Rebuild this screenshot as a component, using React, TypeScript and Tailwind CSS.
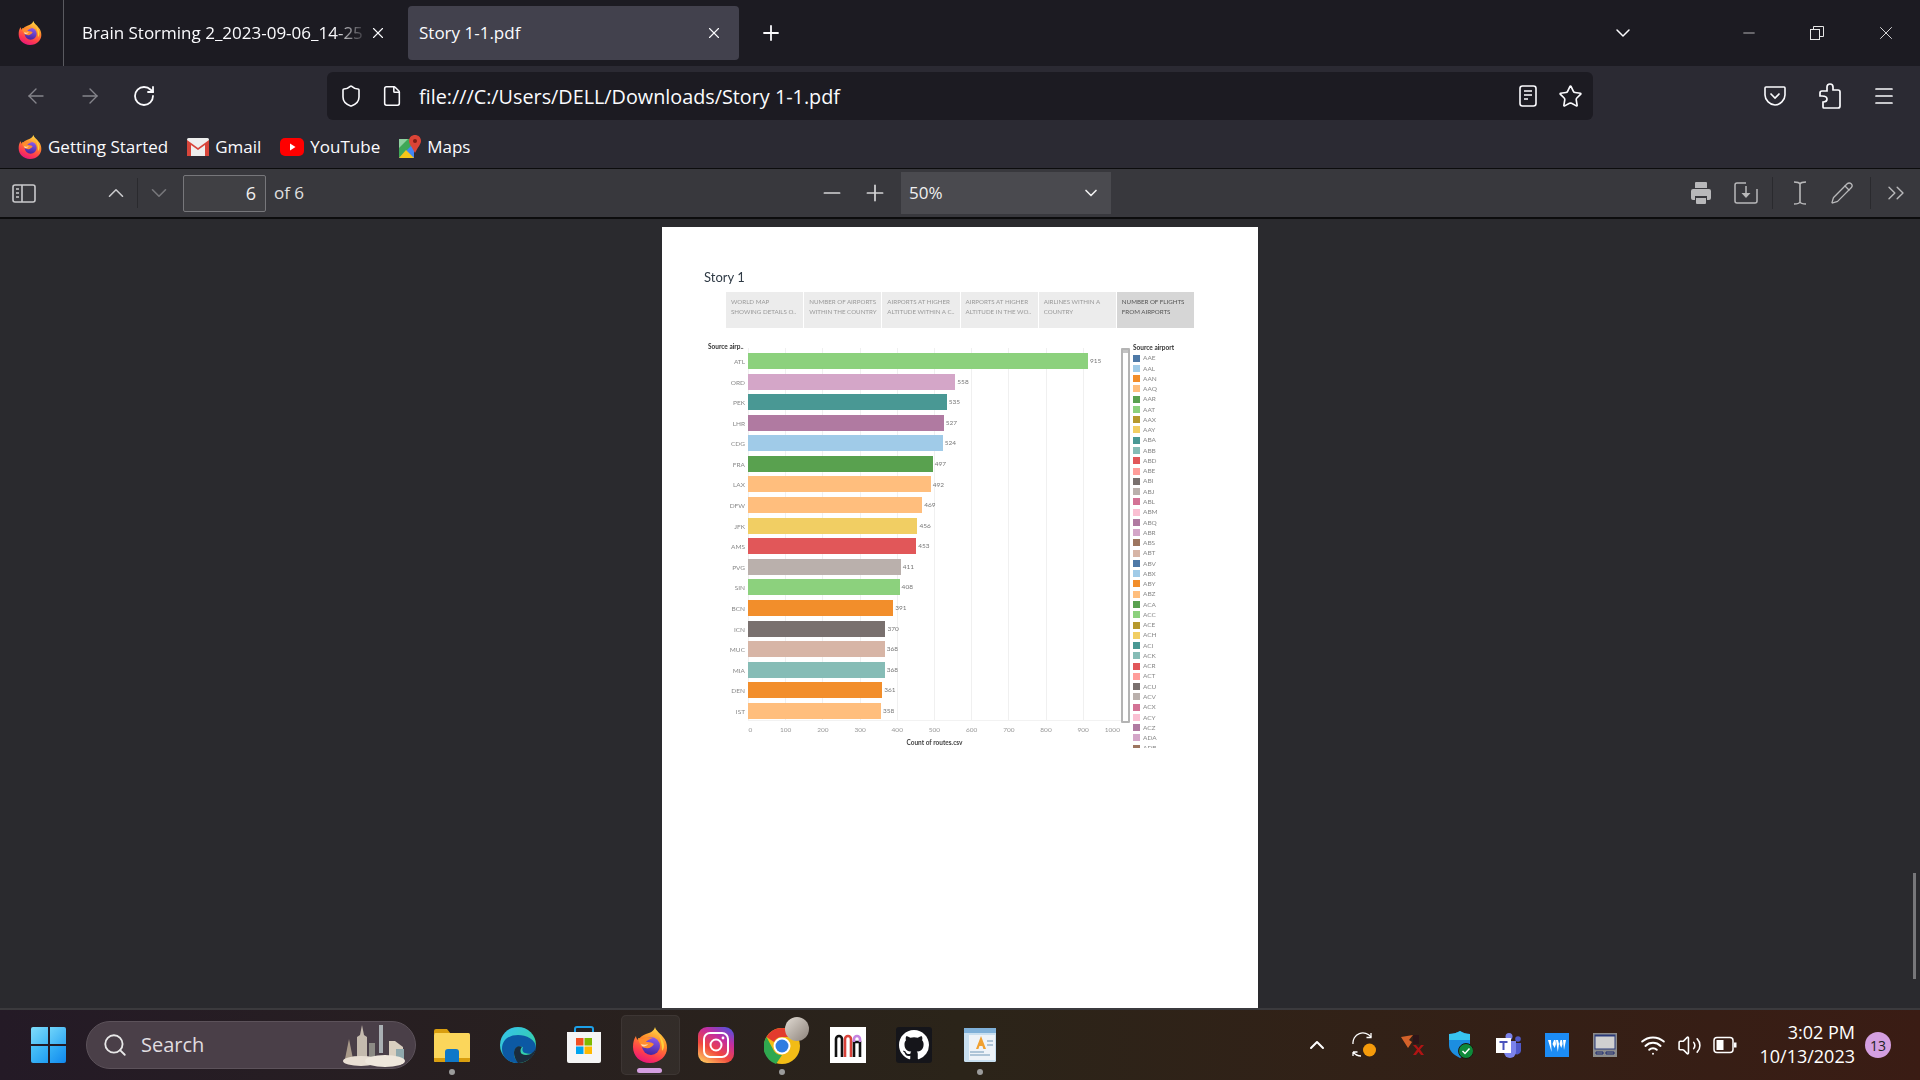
import React from "react";
import {
  ArrowLeft,
  ArrowRight,
  ChevronDown,
  ChevronUp,
  ChevronsRight,
  File,
  Menu,
  Minus,
  Pencil,
  Plus,
  RotateCw,
  Search,
  Shield,
  Star,
  Volume2,
  Wifi,
  X,
} from "lucide-react";

const BARS = [
  { code: "ATL", value: 915, color: "#8cd17d" },
  { code: "ORD", value: 558, color: "#d4a6c8" },
  { code: "PEK", value: 535, color: "#499894" },
  { code: "LHR", value: 527, color: "#b07aa1" },
  { code: "CDG", value: 524, color: "#a0cbe8" },
  { code: "FRA", value: 497, color: "#59a14f" },
  { code: "LAX", value: 492, color: "#ffbe7d" },
  { code: "DFW", value: 469, color: "#ffbe7d" },
  { code: "JFK", value: 456, color: "#f1ce63" },
  { code: "AMS", value: 453, color: "#e15759" },
  { code: "PVG", value: 411, color: "#bab0ac" },
  { code: "SIN", value: 408, color: "#8cd17d" },
  { code: "BCN", value: 391, color: "#f28e2b" },
  { code: "ICN", value: 370, color: "#79706e" },
  { code: "MUC", value: 368, color: "#d7b5a6" },
  { code: "MIA", value: 368, color: "#86bcb6" },
  { code: "DEN", value: 361, color: "#f28e2b" },
  { code: "IST", value: 358, color: "#ffbe7d" },
];

const PALETTE = [
  "#4e79a7", "#a0cbe8", "#f28e2b", "#ffbe7d", "#59a14f", "#8cd17d", "#b6992d", "#f1ce63", "#499894", "#86bcb6",
  "#e15759", "#ff9d9a", "#79706e", "#bab0ac", "#d37295", "#fabfd2", "#b07aa1", "#d4a6c8", "#9d7660", "#d7b5a6",
];

const LEGEND = [
  "AAE", "AAL", "AAN", "AAQ", "AAR", "AAT", "AAX", "AAY", "ABA", "ABB", "ABD", "ABE", "ABI", "ABJ", "ABL", "ABM",
  "ABQ", "ABR", "ABS", "ABT", "ABV", "ABX", "ABY", "ABZ", "ACA", "ACC", "ACE", "ACH", "ACI", "ACK", "ACR", "ACT",
  "ACU", "ACV", "ACX", "ACY", "ACZ", "ADA", "ADB",
];

const STORY_TABS = [
  ["WORLD MAP", "SHOWING DETAILS O.."],
  ["NUMBER OF AIRPORTS", "WITHIN THE COUNTRY"],
  ["AIRPORTS AT HIGHER", "ALTITUDE WITHIN A C.."],
  ["AIRPORTS AT HIGHER", "ALTITUDE IN THE WO.."],
  ["AIRLINES WITHIN A", "COUNTRY"],
  ["NUMBER OF FLIGHTS", "FROM AIRPORTS"],
];

const TICKS = [0, 100, 200, 300, 400, 500, 600, 700, 800, 900, 1000];

function FirefoxLogo({ size }: { size: number }) {
  return (
    <svg width={size} height={size} viewBox="0 0 36 36">
      <defs>
        <linearGradient id="ffBody" x1="0.75" y1="0" x2="0.35" y2="1">
          <stop offset="0" stopColor="#ffe14a" />
          <stop offset="0.4" stopColor="#ff8a2a" />
          <stop offset="0.75" stopColor="#ff3d4d" />
          <stop offset="1" stopColor="#e8177a" />
        </linearGradient>
        <linearGradient id="ffGlobe" x1="0.6" y1="0" x2="0.4" y2="1">
          <stop offset="0" stopColor="#8a5cf0" />
          <stop offset="1" stopColor="#45259e" />
        </linearGradient>
      </defs>
      <path
        d="M23 0c1 4 5 6 8 10 3 3 4 7 4 11 0 8-7 15-17 15S1 29 1 20c0-5 1-8 3-11 0 2 1 3 2 4 2-3 5-5 8-6 4-1 8-3 9-7z"
        fill="url(#ffBody)"
      />
      <path d="M27 8c3 3 5 7 5 11 0 2-1 4-2 5 0-6-1-11-3-16z" fill="#ffcf3a" />
      <circle cx="19" cy="19" r="9" fill="url(#ffGlobe)" />
      <path d="M6 11c2 0 3 1 4 1 3-1 7-2 11-1-3 1-6 2-7 4 2 0 5 0 8 2-2 3-5 5-8 4-3 0-5-2-6-4-1-2-2-4-2-6z" fill="#ff8d2e" />
      <path d="M9 17c2 1 5 1 7 0-1 2-4 3-6 2z" fill="#ffd9b0" />
    </svg>
  );
}

function GmailIcon() {
  return (
    <svg width="22" height="18" viewBox="0 0 22 18">
      <rect x="0" y="0" width="22" height="18" rx="1.5" fill="#eee" />
      <path d="M0 2l11 8 11-8v16h-4V7l-7 5-7-5v11H0z" fill="#d8453a" />
    </svg>
  );
}

function YoutubeIcon() {
  return (
    <svg width="24" height="18" viewBox="0 0 24 18">
      <rect width="24" height="18" rx="5" fill="#f00" />
      <path d="M10 5.5l5.5 3.5-5.5 3.5z" fill="#fff" />
    </svg>
  );
}

function MapsIcon() {
  return (
    <svg width="22" height="24" viewBox="0 0 22 24">
      <path d="M0 4h15v19H0z" fill="#3fa757" />
      <path d="M0 23L15 8v15z" fill="#4285f4" />
      <path d="M0 23l7-8 8 8z" fill="#f5c518" />
      <path d="M0 4h9L0 13z" fill="#8fd1a0" />
      <path d="M16 0c3 0 6 2 6 6 0 3-3 6-6 12-3-6-6-9-6-12 0-4 3-6 6-6z" fill="#db4437" />
      <circle cx="16" cy="6" r="2" fill="#7c1d16" />
    </svg>
  );
}

function ReaderIcon() {
  return (
    <svg width="20" height="22" viewBox="0 0 20 22" fill="none" stroke="#fbfbfe" strokeWidth="1.6">
      <rect x="2" y="1" width="16" height="20" rx="2.5" />
      <path d="M6 6h8M6 10h8M6 14h4" />
    </svg>
  );
}

function PocketIcon() {
  return (
    <svg width="22" height="20" viewBox="0 0 22 20" fill="none" stroke="#fbfbfe" strokeWidth="1.6">
      <path d="M2 1h18a1 1 0 0 1 1 1v7c0 5-5 10-10 10S1 14 1 9V2a1 1 0 0 1 1-1z" />
      <path d="M6.5 7.5L11 12l4.5-4.5" />
    </svg>
  );
}

function ExtensionIcon() {
  return (
    <svg width="22" height="26" viewBox="0 0 22 26" fill="none" stroke="#fbfbfe" strokeWidth="1.7">
      <path d="M11 1c2 0 3 1.500 3 3v3h5a2 2 0 0 1 2 2v14a2 2 0 0 1-2 2H5a1 1 0 0 1-1-1v-5c2 0 4-1 4-3s-2-3-5-3h-2v-3c0-1 1-2 2-2h5V4c0-1.500 1-3 3-3z" />
    </svg>
  );
}

function SidebarIcon() {
  return (
    <svg width="24" height="19" viewBox="0 0 24 19" fill="none" stroke="#c9c9cc" strokeWidth="1.6">
      <rect x="1" y="1" width="22" height="17" rx="2" />
      <path d="M10 1v17M4 5h3M4 9h3M4 13h3" />
    </svg>
  );
}

function PrintIcon() {
  return (
    <svg width="22" height="24" viewBox="0 0 22 24" fill="#b8b8ba">
      <path d="M6 1h10a1 1 0 0 1 1 1v5H5V2a1 1 0 0 1 1-1z" />
      <path d="M3 8h16a2 2 0 0 1 2 2v7a2 2 0 0 1-2 2h-2v-4H5v4H3a2 2 0 0 1-2-2v-7a2 2 0 0 1 2-2z" />
      <path d="M6 17h10v5a1 1 0 0 1-1 1H7a1 1 0 0 1-1-1z" />
    </svg>
  );
}

function SaveIcon() {
  return (
    <svg width="24" height="22" viewBox="0 0 24 22" fill="none" stroke="#b8b8ba" strokeWidth="1.5">
      <path d="M12 1H3a2 2 0 0 0-2 2v16a2 2 0 0 0 2 2h18a2 2 0 0 0 2-2V7" />
      <path d="M12 4v9" />
      <path d="M7.5 11h9L12 16z" fill="#b8b8ba" stroke="none" />
    </svg>
  );
}

function CursorIcon() {
  return (
    <svg width="14" height="24" viewBox="0 0 14 24" fill="none" stroke="#b8b8ba" strokeWidth="1.6">
      <path d="M1 1c3 0 5 0 6 2v18c-1 2-3 2-6 2M13 1c-3 0-5 0-6 2M13 23c-3 0-5 0-6-2" />
    </svg>
  );
}

function RestoreIcon() {
  return (
    <svg width="16" height="16" viewBox="0 0 16 16" fill="none" stroke="#e6e6e6" strokeWidth="1">
      <rect x="1.5" y="4.5" width="9" height="10" />
      <path d="M4.5 4.5v-3h10v10h-4" />
    </svg>
  );
}

function WindowsLogo() {
  return (
    <div className="grid grid-cols-2 gap-[2px] w-[35px] h-[36px]">
      <div className="bg-gradient-to-br from-[#7fdcfb] to-[#3fb8f5] rounded-tl-[2px]" />
      <div className="bg-gradient-to-br from-[#6fd4fa] to-[#2fa9f3] rounded-tr-[2px]" />
      <div className="bg-gradient-to-br from-[#4cc4f8] to-[#1e9cf2] rounded-bl-[2px]" />
      <div className="bg-gradient-to-br from-[#38b4f6] to-[#0f88ee] rounded-br-[2px]" />
    </div>
  );
}

function CityArt() {
  return (
    <svg width="68" height="44" viewBox="0 0 68 44">
      <path d="M6 36l4-20 4 20z" fill="#a99a8a" />
      <path d="M18 38V14l3-2 2-10 2 10 3 2v24z" fill="#c5bbae" />
      <path d="M30 36V20h6v16z" fill="#8c8a84" />
      <path d="M40 30V2h4v28z" fill="#aab0b4" />
      <path d="M50 36V18h6l8 6v12z" fill="#d9cfc0" />
      <path d="M57 26h8v10h-8z" fill="#8fa8ad" />
      <ellipse cx="22" cy="38" rx="18" ry="5" fill="#e9dfd3" />
      <ellipse cx="46" cy="38" rx="20" ry="6" fill="#efe7dc" />
    </svg>
  );
}

function ExplorerIcon() {
  return (
    <svg width="36" height="34" viewBox="0 0 36 34">
      <path d="M0 3a2 2 0 0 1 2-2h11l4 5H0z" fill="#d99e0e" />
      <rect x="0" y="5" width="36" height="29" rx="1.5" fill="#fbd65b" />
      <path d="M0 30h36v2a2 2 0 0 1-2 2H2a2 2 0 0 1-2-2z" fill="#d99e0e" />
      <path d="M11 24a3 3 0 0 1 3-3h8a3 3 0 0 1 3 3v10H11z" fill="#0f78c8" />
    </svg>
  );
}

function EdgeIcon() {
  return (
    <svg width="36" height="36" viewBox="0 0 36 36">
      <defs>
        <linearGradient id="edgeA" x1="0" y1="0" x2="1" y2="1">
          <stop offset="0" stopColor="#35c1f1" />
          <stop offset="1" stopColor="#35d68e" />
        </linearGradient>
      </defs>
      <circle cx="18" cy="18" r="18" fill="url(#edgeA)" />
      <path d="M2 22C2 12 10 8 18 8c8 0 18 4 18 13 0 5-6 7-11 5-3-1-3-4-2-6-6-2-9 2-9 7 0 4 2 7 6 9C10 37 2 31 2 22z" fill="#0c59a4" />
      <path d="M36 20c-2 8-10 9-14 7-2-1-2-5 0-7-4-2-8 1-8 6 0 3 1 6 4 10 9 0 18-7 18-16z" fill="#1b2c3d" />
    </svg>
  );
}

function StoreIcon() {
  return (
    <svg width="36" height="38" viewBox="0 0 36 38">
      <path d="M9 6V3a2 2 0 0 1 2-2h14a2 2 0 0 1 2 2v3" fill="none" stroke="#1ca0e8" strokeWidth="2" />
      <path d="M1 6h34l0 29a2 2 0 0 1-2 2H3a2 2 0 0 1-2-2z" fill="#f5f5f5" />
      <rect x="10" y="12" width="7.5" height="7.5" fill="#f25022" />
      <rect x="18.5" y="12" width="7.5" height="7.5" fill="#7fba00" />
      <rect x="10" y="20.5" width="7.5" height="7.5" fill="#00a4ef" />
      <rect x="18.5" y="20.5" width="7.5" height="7.5" fill="#ffb900" />
    </svg>
  );
}

function InstagramIcon() {
  return (
    <svg width="36" height="36" viewBox="0 0 36 36">
      <defs>
        <linearGradient id="igGrad" x1="0.2" y1="1" x2="0.8" y2="0">
          <stop offset="0" stopColor="#fdc15c" />
          <stop offset="0.35" stopColor="#f1473e" />
          <stop offset="0.7" stopColor="#c52d9f" />
          <stop offset="1" stopColor="#5b4fd8" />
        </linearGradient>
      </defs>
      <rect width="36" height="36" rx="9" fill="url(#igGrad)" />
      <rect x="6" y="6" width="24" height="24" rx="6" fill="none" stroke="#fff" strokeWidth="2" />
      <circle cx="18" cy="18" r="5.5" fill="none" stroke="#fff" strokeWidth="2" />
      <circle cx="25" cy="11" r="1.4" fill="#fff" />
    </svg>
  );
}

function ChromeIcon() {
  return (
    <div className="relative w-[36px] h-[36px]">
      <svg width="36" height="38" viewBox="0 0 36 38">
        <circle cx="18" cy="19" r="18" fill="#f2bc16" />
        <path d="M18 1a18 18 0 0 1 15.6 9H18a9 9 0 0 0-8 5L2.5 10A18 18 0 0 1 18 1z" fill="#e33b2e" />
        <path d="M2.5 10L10 24a9 9 0 0 0 8 4l-6 9A18 18 0 0 1 2.5 10z" fill="#2fa84f" />
        <circle cx="18" cy="19" r="8.5" fill="#fff" />
        <circle cx="18" cy="19" r="6.5" fill="#2f7de1" />
      </svg>
      <div className="absolute left-[21px] top-[-10px] w-[24px] h-[24px] rounded-full bg-gradient-to-br from-[#e2dcd4] to-[#8d837b]" />
    </div>
  );
}

function ArcIcon() {
  return (
    <div className="w-[36px] h-[36px] bg-white flex items-center justify-center">
      <svg width="28" height="24" viewBox="0 0 28 24" fill="none" strokeWidth="2.6">
        <path d="M2 24V6a3 3 0 0 1 6 0v18" stroke="#111" />
        <path d="M11 24V6a3 3 0 0 1 6 0v18" stroke="#d9423a" />
        <path d="M20 24V9h6v15" stroke="#111" />
        <path d="M20 9V6a3 3 0 0 1 6 0v3" stroke="#c583e0" />
      </svg>
    </div>
  );
}

function GithubIcon() {
  return (
    <div className="w-[36px] h-[36px] bg-[#15151a] rounded-[3px] flex items-center justify-center">
      <svg width="30" height="32" viewBox="0 0 16 16" fill="#fff">
        <path d="M8 0C3.58 0 0 3.58 0 8c0 3.54 2.29 6.53 5.47 7.59.4.07.55-.17.55-.38 0-.19-.01-.82-.01-1.49-2.01.37-2.53-.49-2.69-.94-.09-.23-.48-.94-.82-1.13-.28-.15-.68-.52-.01-.53.63-.01 1.08.58 1.23.82.72 1.21 1.87.87 2.33.66.07-.52.28-.87.51-1.07-1.78-.2-3.64-.89-3.64-3.95 0-.87.31-1.59.82-2.15-.08-.2-.36-1.02.08-2.12 0 0 .67-.21 2.2.82.64-.18 1.32-.27 2-.27s1.36.09 2 .27c1.53-1.04 2.2-.82 2.2-.82.44 1.1.16 1.92.08 2.12.51.56.82 1.27.82 2.15 0 3.07-1.87 3.75-3.65 3.95.29.25.54.73.54 1.48 0 1.07-.01 1.93-.01 2.2 0 .21.15.46.55.38A8.01 8.01 0 0 0 16 8c0-4.42-3.58-8-8-8z" />
      </svg>
    </div>
  );
}

function WordpadIcon() {
  return (
    <svg width="36" height="36" viewBox="0 0 36 36">
      <rect x="2" y="1" width="32" height="34" rx="1.5" fill="#c8dff0" />
      <rect x="2" y="1" width="32" height="5" fill="#7fb0d8" />
      <rect x="7" y="8" width="26" height="25" fill="#eef3f8" />
      <path d="M14 22l5-13 5 13h-2.6l-1-3h-3l-1 3z" fill="#f0a030" />
      <path d="M8 25h14M8 28h20M25 14h6M25 18h6" stroke="#9bb6cc" strokeWidth="1.4" />
    </svg>
  );
}

function SyncIcon() {
  return (
    <svg width="26" height="26" viewBox="0 0 26 26" fill="none" stroke="#fff" strokeWidth="1.3">
      <path d="M1 12A10 10 0 0 1 19 5" />
      <path d="M19 1v4.5h-4.5" />
      <path d="M1 20v4M1 20h4.5M1 20c2 2.5 4.5 4 8 4" />
      <circle cx="17.5" cy="18" r="6.5" fill="#f59b0b" stroke="none" />
    </svg>
  );
}

function VectorIcon() {
  return (
    <svg width="26" height="22" viewBox="0 0 26 22">
      <path d="M1 3l12-2-4 5 3 2-4 6z" fill="#d4622a" />
      <path d="M13 1h6v9h-6z" fill="#2c1418" />
      <path d="M13 11l3 0 2.500 3 2.500-3 3 0-4 4.500 4 5.500h-3l-2.500-3.200L16 21h-3l4-5.500z" fill="#b01414" />
    </svg>
  );
}

function DefenderIcon() {
  return (
    <svg width="24" height="28" viewBox="0 0 24 28">
      <path d="M11 0c3 2 6 3 10 3v11c0 6-4 10-10 13C5 24 0 20 0 14V3c4 0 8-1 11-3z" fill="#1c8ee0" />
      <path d="M11 0c3 2 6 3 10 3v6H0V3c4 0 8-1 11-3z" fill="#38c4ef" />
      <circle cx="17" cy="20" r="7.500" fill="#0e8a3a" stroke="#20150f" strokeWidth="1" />
      <path d="M13.500 20l2.500 2.500 4.500-5" fill="none" stroke="#fff" strokeWidth="1.5" />
    </svg>
  );
}

function TeamsIcon() {
  return (
    <svg width="26" height="26" viewBox="0 0 26 26">
      <circle cx="13" cy="4.500" r="3.500" fill="#7b83eb" />
      <circle cx="22" cy="7" r="2.800" fill="#5059c9" />
      <path d="M18 11h7v8a4 4 0 0 1-7 2z" fill="#5059c9" />
      <path d="M8 9h12v11a6 6 0 0 1-12 0z" fill="#7b83eb" />
      <rect x="0" y="6" width="15" height="15" fill="#fff" />
      <path d="M3.500 9h8v2H8.500v7h-2v-7h-3z" fill="#4b53bc" />
    </svg>
  );
}

function WavesIcon() {
  return (
    <div className="w-[24px] h-[24px] bg-[#1c8cf5] flex items-center justify-center">
      <svg width="20" height="14" viewBox="0 0 20 14" fill="#fff">
        <path d="M1 2l3 0 .6 12zM5.500 6l1.500-4 1.500 0 .5 4L7.700 10zM9 2l2 0 1 4-1.200 8zM12.500 6l1-4 1.500 0 .6 4-1.300 4zM16 2l3 0-2 10z" />
      </svg>
    </div>
  );
}

function MonitorTrayIcon() {
  return (
    <svg width="24" height="24" viewBox="0 0 24 24">
      <rect width="24" height="24" fill="#8c8c8c" />
      <rect x="2" y="2" width="20" height="14" fill="#d0d0d0" stroke="#2a3a7a" strokeWidth="1" />
      <rect x="2" y="2" width="20" height="1.500" fill="#2a3a7a" />
      <path d="M3 21v-2h7v2zM13 21v-2h8v2z" fill="none" stroke="#1d2a70" strokeWidth="1" />
    </svg>
  );
}

function BatteryIcon() {
  return (
    <svg width="24" height="18" viewBox="0 0 24 18" fill="none">
      <rect x="1" y="1.500" width="19" height="15" rx="3" stroke="#fff" strokeWidth="1.500" />
      <rect x="3.500" y="4" width="7" height="10" fill="#fff" />
      <rect x="21" y="6.500" width="2.500" height="5" fill="#fff" />
    </svg>
  );
}

function Bookmark({ icon, label }: { icon: React.ReactNode; label: string }) {
  return (
    <div className="flex items-center gap-[6px]">
      {icon}
      <span className="text-[17px] text-[#fbfbfe]">{label}</span>
    </div>
  );
}

function TaskSlot({ children, dot, active }: { children: React.ReactNode; dot?: boolean; active?: boolean }) {
  return (
    <div className="relative w-[66px] h-[60px] flex items-center justify-center">
      {active && <div className="absolute left-[4px] right-[3px] inset-y-0 rounded-[5px] bg-white/5 border border-white/5" />}
      <div className="relative">{children}</div>
      {dot && <div className="absolute bottom-[0px] left-[30px] w-[6px] h-[6px] rounded-full bg-[#9b9b9b]" />}
      {active && <div className="absolute bottom-[2px] left-[20px] w-[25px] h-[5px] rounded-full bg-[#d49fe0]" />}
    </div>
  );
}

function TraySlot({ children }: { children: React.ReactNode }) {
  return <div className="w-[48px] h-[30px] flex items-center justify-center">{children}</div>;
}

function StoryChart() {
  return (
    <div className="font-['Lato',sans-serif] blur-[0.4px]">
      <div className="ml-[42px] text-[13px] leading-[16px] text-[#2f3a45]">Story 1</div>
      <div className="ml-[64px] mt-[7px] flex gap-[1px] w-[468px] h-[36px]">
        {STORY_TABS.map((tab, i) => (
          <div
            key={i}
            className={
              i === 5
                ? "flex-1 bg-[#d6d6d6] pl-[5px] pt-[5px] text-[6.2px] leading-[10px] text-[#555] whitespace-nowrap overflow-hidden"
                : "flex-1 bg-[#ececec] pl-[5px] pt-[5px] text-[6.2px] leading-[10px] text-[#999] whitespace-nowrap overflow-hidden"
            }
          >
            <div>{tab[0]}</div>
            <div>{tab[1]}</div>
          </div>
        ))}
      </div>
      <div className="flex mt-[15px]">
        <div className="w-[86px] shrink-0">
          <div className="pl-[46px] h-[10px] text-[6.5px] leading-[8px] font-bold text-[#333] whitespace-nowrap">Source airp..</div>
          <div className="flex flex-col gap-[4.58px] mt-[1px]">
            {BARS.map((bar) => (
              <div key={bar.code} className="h-[16px] pr-[3px] text-right text-[6.5px] leading-[16px] text-[#888]">
                {bar.code}
              </div>
            ))}
          </div>
        </div>
        <div className="w-[373px] shrink-0">
          <div className="relative h-[373px] mt-[5px] border-b border-[#f2f2f2]">
            <div className="absolute inset-0 flex justify-between">
              {TICKS.map((tick) => (
                <div key={tick} className={tick === 1000 ? "w-px h-full" : "w-px h-full bg-[#f0f0f0]"} />
              ))}
            </div>
            <div className="relative flex flex-col gap-[4.58px] pt-[5px]">
              {BARS.map((bar) => (
                <div key={bar.code} className="flex items-center h-[16px]">
                  <div className="h-[16px]" style={{ width: bar.value * 0.3716, backgroundColor: bar.color }} />
                  <span className="ml-[2px] text-[6.5px] text-[#777]">{bar.value}</span>
                </div>
              ))}
            </div>
          </div>
          <div className="flex justify-between mt-[5px] text-[6.5px] leading-[8px] text-[#999]">
            {TICKS.map((tick) => (
              <span
                key={tick}
                className={
                  tick === 0
                    ? "w-px flex justify-center translate-x-[2px]"
                    : tick === 1000
                      ? "w-px flex justify-center -translate-x-[8px]"
                      : "w-px flex justify-center"
                }
              >
                {tick}
              </span>
            ))}
          </div>
          <div className="mt-[5px] text-center text-[6.5px] leading-[8px] font-bold text-[#444]">Count of routes.csv</div>
        </div>
        <div className="w-[9px] h-[375px] mt-[5px] shrink-0 border-2 border-[#b4b4b4] rounded-[1px]">
          <div className="h-[3px] bg-[#c4c4c4]" />
        </div>
        <div className="ml-[3px] h-[405px] overflow-hidden pt-[1px]">
          <div className="h-[9px] text-[6.5px] leading-[8px] font-bold text-[#333] whitespace-nowrap">Source airport</div>
          <div className="flex flex-col">
            {LEGEND.map((code, i) => (
              <div key={code} className="flex items-center gap-[3px] h-[10.28px]">
                <div className="w-[7px] h-[7px]" style={{ backgroundColor: PALETTE[i % 20] }} />
                <span className="text-[6.5px] text-[#888]">{code}</span>
              </div>
            ))}
          </div>
        </div>
      </div>
    </div>
  );
}

export default function App() {
  return (
    <div className="w-[1920px] h-[1080px] flex flex-col overflow-hidden bg-[#2a2a2e] font-['Open_Sans',sans-serif]">
      {/* Tab strip */}
      <div className="h-[66px] shrink-0 bg-[#1c1b22] flex items-center text-[#fbfbfe]">
        <div className="w-[64px] h-full shrink-0 border-r border-[#5a5a60] mr-[18px] pl-[18px] flex items-center">
          <FirefoxLogo size={24} />
        </div>
        <div className="w-[286px] text-[17px] whitespace-nowrap overflow-hidden [mask-image:linear-gradient(to_right,black_88%,transparent)]">
          Brain Storming 2_2023-09-06_14-25
        </div>
        <X size={18} strokeWidth={1.5} className="ml-[1px] mr-[21px]" />
        <div className="w-[331px] h-[54px] bg-[#42414d] rounded-[4px] flex items-center justify-between pl-[11px] pr-[16px] text-[17px]">
          <span>Story 1-1.pdf</span>
          <X size={18} strokeWidth={1.5} />
        </div>
        <Plus size={24} strokeWidth={1.8} className="ml-[20px]" />
        <div className="flex-1" />
        <ChevronDown size={24} strokeWidth={1.5} className="mr-[105px]" />
        <Minus size={18} strokeWidth={1} className="mr-[51px]" color="#e6e6e6" />
        <RestoreIcon />
        <X size={22} strokeWidth={1} className="ml-[50px] mr-[23px]" color="#e6e6e6" />
      </div>

      {/* Nav and bookmarks */}
      <div className="h-[102px] shrink-0 bg-[#2b2a33] pt-[6px]">
        <div className="h-[48px] flex items-center">
          <ArrowLeft size={24} strokeWidth={1.4} color="#85858c" className="ml-[24px]" />
          <ArrowRight size={24} strokeWidth={1.4} color="#85858c" className="ml-[30px]" />
          <RotateCw size={24} strokeWidth={1.8} color="#fbfbfe" className="ml-[30px] mr-[171px]" />
          <div className="w-[1266px] h-[48px] bg-[#1c1b22] rounded-[6px] flex items-center pl-[12px] pr-[10px]">
            <Shield size={24} strokeWidth={1.6} color="#fbfbfe" />
            <File size={22} strokeWidth={1.7} color="#fbfbfe" className="ml-[18px]" />
            <span className="ml-[16px] mt-[2px] text-[19.8px] text-[#fbfbfe]">file:///C:/Users/DELL/Downloads/Story 1-1.pdf</span>
            <div className="flex-1" />
            <ReaderIcon />
            <Star size={25} strokeWidth={1.6} color="#fbfbfe" className="ml-[20px]" />
          </div>
          <div className="ml-[171px]"><PocketIcon /></div>
          <div className="ml-[33px]"><ExtensionIcon /></div>
          <Menu size={24} strokeWidth={1.7} color="#fbfbfe" className="ml-[31px]" />
        </div>
        <div className="h-[48px] mt-[3px] flex items-center gap-[19px] pl-[18px]">
          <Bookmark icon={<FirefoxLogo size={24} />} label="Getting Started" />
          <Bookmark icon={<GmailIcon />} label="Gmail" />
          <Bookmark icon={<YoutubeIcon />} label="YouTube" />
          <Bookmark icon={<MapsIcon />} label="Maps" />
        </div>
      </div>

      {/* PDF toolbar */}
      <div className="h-[51px] shrink-0 bg-[#38383d] border-t border-[#0c0c0d] border-b-2 border-b-[#0c0c0d] flex items-center">
        <div className="ml-[12px]"><SidebarIcon /></div>
        <ChevronUp size={26} strokeWidth={1.5} color="#c9c9cc" className="ml-[67px]" />
        <div className="w-px h-[30px] bg-[#2a2a2e] ml-[8px]" />
        <ChevronDown size={26} strokeWidth={1.5} color="#77777b" className="ml-[8px]" />
        <div className="ml-[11px] w-[83px] h-[37px] border border-[#77777b] rounded-[2px] bg-[#404044] flex items-center justify-end pr-[9px] text-[18px] text-[#f0f0f0]">6</div>
        <span className="ml-[8px] text-[17px] text-[#e0e0e0]">of 6</span>
        <Minus size={26} strokeWidth={1.6} color="#d4d4d6" className="ml-[515px]" />
        <Plus size={26} strokeWidth={1.6} color="#d4d4d6" className="ml-[17px]" />
        <div className="ml-[13px] w-[210px] h-[42px] bg-[#4a4a4f] flex items-center justify-between pl-[8px] pr-[10px] text-[17px] text-[#f0f0f0]">
          <span>50%</span>
          <ChevronDown size={20} strokeWidth={2} />
        </div>
        <div className="flex-1" />
        <PrintIcon />
        <div className="ml-[22px]"><SaveIcon /></div>
        <div className="w-px h-[32px] bg-[#2a2a2e] ml-[14px]" />
        <div className="ml-[20px]"><CursorIcon /></div>
        <Pencil size={24} strokeWidth={1.3} color="#b8b8ba" className="ml-[23px]" />
        <div className="w-px h-[32px] bg-[#2a2a2e] ml-[16px]" />
        <ChevronsRight size={28} strokeWidth={1.2} color="#b8b8ba" className="ml-[11px] mr-[10px]" />
      </div>

      {/* Viewer */}
      <div className="relative flex-1 min-h-0 flex justify-center pt-[8px] bg-[#2a2a2e]">
        <div className="w-[596px] h-[781px] bg-white pt-[42px] overflow-hidden">
          <StoryChart />
        </div>
        <div className="absolute right-[4px] top-[654px] w-[3px] h-[106px] bg-[#77777a]" />
      </div>

      {/* Taskbar */}
      <div className="h-[72px] shrink-0 border-t-2 border-[#3b3a3d] bg-gradient-to-r from-[#241a26] via-[#2b2419] to-[#3a1c14] flex items-center">
        <div className="ml-[31px]"><WindowsLogo /></div>
        <div className="ml-[20px] w-[330px] h-[48px] rounded-full bg-[#4a3f48] border border-[#5c525a] flex items-center pl-[15px] pr-[8px]">
          <Search size={26} strokeWidth={1.7} color="#e8e8e8" />
          <span className="ml-[13px] text-[20px] text-[#e0dde0]">Search</span>
          <div className="flex-1" />
          <CityArt />
        </div>
        <div className="ml-[3px] flex items-center">
          <TaskSlot dot><ExplorerIcon /></TaskSlot>
          <TaskSlot><EdgeIcon /></TaskSlot>
          <TaskSlot><StoreIcon /></TaskSlot>
          <TaskSlot active><FirefoxLogo size={36} /></TaskSlot>
          <TaskSlot><InstagramIcon /></TaskSlot>
          <TaskSlot dot><ChromeIcon /></TaskSlot>
          <TaskSlot><ArcIcon /></TaskSlot>
          <TaskSlot><GithubIcon /></TaskSlot>
          <TaskSlot dot><WordpadIcon /></TaskSlot>
        </div>
        <div className="flex-1" />
        <div className="flex items-center">
          <TraySlot><ChevronUp size={24} strokeWidth={2} color="#fff" /></TraySlot>
          <TraySlot><SyncIcon /></TraySlot>
          <TraySlot><VectorIcon /></TraySlot>
          <TraySlot><DefenderIcon /></TraySlot>
          <TraySlot><TeamsIcon /></TraySlot>
          <TraySlot><WavesIcon /></TraySlot>
          <TraySlot><MonitorTrayIcon /></TraySlot>
          <TraySlot><Wifi size={26} strokeWidth={1.8} color="#fff" /></TraySlot>
          <div className="w-[24px] flex justify-center"><Volume2 size={25} strokeWidth={1.5} color="#fff" className="shrink-0" /></div>
          <div className="w-[48px] flex justify-center"><BatteryIcon /></div>
        </div>
        <div className="ml-[6px] mb-[2px] w-[100px] text-right text-[18px] leading-[24px] text-white">
          <div>3:02 PM</div>
          <div>10/13/2023</div>
        </div>
        <div className="ml-[10px] mr-[29px] w-[26px] h-[26px] rounded-full bg-[#d49fe0] flex items-center justify-center text-[14px] text-[#222]">13</div>
      </div>
    </div>
  );
}
